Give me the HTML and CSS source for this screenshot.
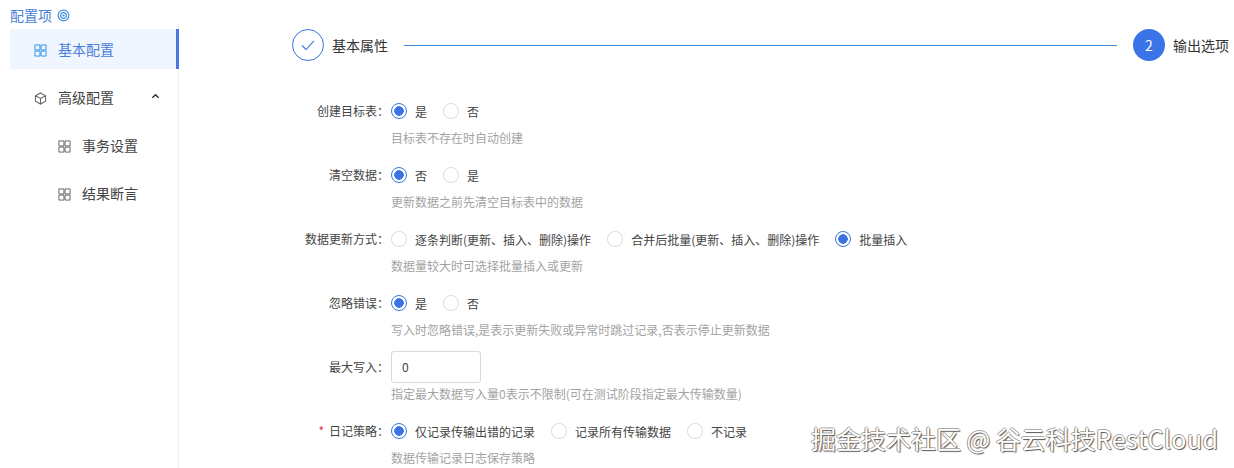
FILE: index.html
```html
<!DOCTYPE html>
<html lang="zh">
<head>
<meta charset="utf-8">
<title>配置项</title>
<link rel="stylesheet" href="styles.css">
</head>
<body>
<svg class="defs" width="0" height="0" aria-hidden="true">
  <symbol id="grid" viewBox="0 0 14 14"><path d="M1 1h5.400v5.400H1zM7.600 1H13v5.400H7.600zM1 7.600h5.400V13H1zM7.600 7.600H13V13H7.600z" fill="none" stroke="currentColor" stroke-width="1.050"/></symbol>
</svg>
<div class="page">
  <aside class="sidebar">
    <div class="side-title">配置项
      <svg class="target" viewBox="0 0 14 14"><circle cx="7" cy="7" r="5.800" fill="none" stroke="#3d8fe0" stroke-width="1.300"/><circle cx="7" cy="7" r="3.100" fill="none" stroke="#3d8fe0" stroke-width="1.200"/><circle cx="7" cy="7" r="1.200" fill="#3d8fe0"/></svg>
    </div>
    <nav class="menu">
      <div class="item active"><svg class="ico"><use href="#grid"/></svg><span>基本配置</span></div>
      <div class="item"><svg class="ico" viewBox="0 0 14 14"><path d="M7 1l5.500 3v6L7 13l-5.500-3V4zM1.500 4L7 7l5.500-3M7 7v6" fill="none" stroke="currentColor" stroke-width="1.100"/></svg><span>高级配置</span>
        <svg class="caret" viewBox="0 0 10 6"><path d="M1.500 5L5 1.500 8.500 5" fill="none" stroke="#333" stroke-width="1.600"/></svg></div>
      <div class="item sub"><svg class="ico"><use href="#grid"/></svg><span>事务设置</span></div>
      <div class="item sub"><svg class="ico"><use href="#grid"/></svg><span>结果断言</span></div>
    </nav>
  </aside>
  <main class="main">
    <div class="steps">
      <div class="circle done"><svg viewBox="0 0 16 16" width="16" height="16"><path d="M2 8.500l4 4L14 3.800" fill="none" stroke="#3b74e0" stroke-width="1.100"/></svg></div>
      <span class="step-text">基本属性</span>
      <div class="line"></div>
      <div class="circle now">2</div>
      <span class="step-text">输出选项</span>
    </div>
    <form class="form">
      <div class="label">创建目标表：</div>
      <div class="ctl"><label class="radio on">是</label><label class="radio">否</label></div>
      <div class="help">目标表不存在时自动创建</div>

      <div class="label">清空数据：</div>
      <div class="ctl"><label class="radio on">否</label><label class="radio">是</label></div>
      <div class="help">更新数据之前先清空目标表中的数据</div>

      <div class="label">数据更新方式：</div>
      <div class="ctl"><label class="radio">逐条判断(更新、插入、删除)操作</label><label class="radio">合并后批量(更新、插入、删除)操作</label><label class="radio on">批量插入</label></div>
      <div class="help">数据量较大时可选择批量插入或更新</div>

      <div class="label">忽略错误：</div>
      <div class="ctl"><label class="radio on">是</label><label class="radio">否</label></div>
      <div class="help short">写入时忽略错误,是表示更新失败或异常时跳过记录,否表示停止更新数据</div>

      <div class="label tall">最大写入：</div>
      <div class="ctl tall"><div class="input">0</div></div>
      <div class="help tight">指定最大数据写入量0表示不限制(可在测试阶段指定最大传输数量)</div>

      <div class="label"><i class="req">*</i>日记策略：</div>
      <div class="ctl"><label class="radio on">仅记录传输出错的记录</label><label class="radio">记录所有传输数据</label><label class="radio">不记录</label></div>
      <div class="help">数据传输记录日志保存策略</div>
    </form>
  </main>
</div>
<div class="watermark">掘金技术社区 @ 谷云科技<span class="wm-latin">RestCloud</span></div>
</body>
</html>
```
FILE: styles.css
```css
*, *::before { box-sizing: border-box; }
html, body { margin: 0; height: 468px; overflow: hidden; background: #fff; }
body { font-family: "Noto Sans CJK SC", "Noto Sans", sans-serif; font-size: 12px; color: #333; }
.defs { position: absolute; }
.page { display: flex; height: 468px; }

.sidebar { width: 179px; flex: none; padding: 6px 0 0 10px; }
.side-title { height: 18px; line-height: 18px; font-size: 14px; color: #4a7fd6; display: flex; align-items: center; gap: 5px; }
.target { width: 13px; height: 13px; }
.menu { border-right: 1px solid #eceef2; height: 444px; padding-top: 5px; }
.item { position: relative; height: 40px; margin-bottom: 8px; display: flex; align-items: center; padding-left: 24px; font-size: 14px; color: #444; }
.item .ico { width: 13px; height: 13px; margin-right: 11px; color: #666; flex: none; position: relative; top: 1px; }
.item.active { background: #f0f6ff; color: #4a7fd6; border-right: 3px solid #4a78e0; margin-right: -1px; }
.item.active .ico { color: #2f95e8; }
.item.sub { padding-left: 48px; }
.caret { width: 9px; height: 6px; position: absolute; left: 141px; top: 16px; }

.main { flex: 1; min-width: 0; }
.steps { display: flex; align-items: center; height: 32px; margin: 29px 5px 0 113px; }
.circle { width: 32px; height: 32px; border-radius: 50%; flex: none; display: flex; align-items: center; justify-content: center; }
.circle.done { border: 1px solid #3b74e0; }
.circle.now { background: #3b74e8; color: #fff; font-size: 14px; }
.step-text { font-size: 14px; color: #333; margin-left: 8px; flex: none; }
.line { flex: 1; height: 1px; background: #3a8ad6; margin: 0 16px; }

.form { display: grid; grid-template-columns: 210px 1fr; margin-top: 38px; }
.label { height: 24px; line-height: 24px; text-align: right; white-space: nowrap; color: #444; }
.req { font-style: normal; color: #d9363e; margin-right: 5px; }
.ctl { height: 24px; display: flex; align-items: center; margin-left: 2px; }
.help { grid-column: 2; height: 40px; padding: 6px 0 0 2px; line-height: 18px; color: #a3a3a3; }
.help.short { height: 36px; }
.help.tight { height: 36px; padding-top: 2px; }
.radio { display: flex; align-items: center; margin-right: 16px; color: #444; white-space: nowrap; }
.radio::before { content: ""; width: 16px; height: 16px; margin-right: 8px; border-radius: 50%; border: 1px solid #dcdcdc; background: #fff; flex: none; }
.radio.on::before { border-color: #3b74e0; background: radial-gradient(circle, #3b74e0 0 4.500px, #fff 5px); }
.label.tall, .ctl.tall { height: 32px; line-height: 32px; }
.input { width: 90px; height: 32px; line-height: 30px; border: 1px solid #d9d9d9; border-radius: 3px; padding-left: 10px; color: #444; }

.watermark { position: absolute; left: 811px; top: 421px; font-size: 25px; line-height: 34px; color: #fff; white-space: nowrap; text-shadow: 1px 1px 1px #555, -1px 0 0 #999, 0 -1px 0 #aaa; }
.wm-latin { letter-spacing: 0.4px; }
```
